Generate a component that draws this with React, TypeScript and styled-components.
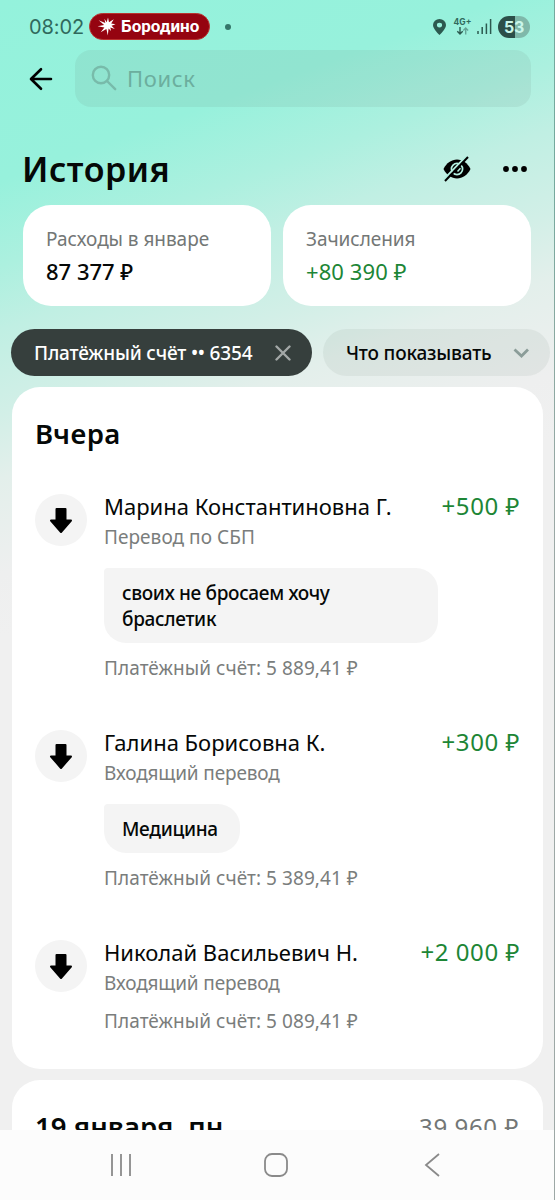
import React from 'react';
import styled, { createGlobalStyle } from 'styled-components';

const GlobalStyle = createGlobalStyle`
  *, *::before, *::after { box-sizing: border-box; }
  body {
    margin: 0;
    background: #f0f0f0;
    color: #050807;
    font-family: "Noto Sans", "Open Sans", sans-serif;
  }
`;

const Screen = styled.div`
  display: flex;
  flex-direction: column;
  width: 555px;
  height: 1200px;
  overflow: hidden;
  border-right: 1px solid rgba(90, 110, 105, 0.55);
  background: linear-gradient(160deg, #94f2dc 0, #97f1dc 170px, #acf0df 250px, #c0efe3 310px, #d2efe7 390px, #e3efeb 450px, #eeefef 540px, #f0f0f0 600px);
`;

const Content = styled.div`
  display: flex;
  flex-direction: column;
  height: 1130px;
  flex: none;
  overflow: hidden;
`;

const StatusBar = styled.header`
  display: flex;
  align-items: center;
  height: 50px;
  padding: 3px 24px 0 29px;
  flex: none;
  color: #30695c;
`;

const Clock = styled.span`
  width: 60px;
  font: 400 20px/24px Inter, Roboto, sans-serif;
  letter-spacing: -0.1px;
`;

const OperatorBadge = styled.span`
  display: flex;
  align-items: center;
  width: 121px;
  height: 27px;
  padding-left: 7px;
  gap: 4px;
  border: 1px solid #b9332f;
  border-radius: 14px;
  background: #950410;
  color: #fff;
  font: 700 17px/25px Roboto, sans-serif;
`;

const Dot = styled.span`
  width: 6px;
  height: 6px;
  margin-left: 15px;
  border-radius: 50%;
  background: #35766a;
`;

const StatusIcons = styled.div`
  display: flex;
  align-items: center;
  margin-left: auto;
`;

const Network = styled.div`
  display: flex;
  flex-direction: column;
  align-items: center;
  width: 19px;
  margin-left: 7px;
  font: 700 8.5px/9px Inter, sans-serif;
`;

const Battery = styled.div`
  display: flex;
  width: 32px;
  height: 22px;
  margin-left: 6px;
  border-radius: 11px;
  overflow: hidden;
  background: linear-gradient(90deg, #2c4f49 0 17px, #7fb8aa 17px);
  justify-content: center;
  color: #c9f6ea;
  font: 700 16px/22px Inter, sans-serif;
  letter-spacing: -0.3px;
`;

const SearchRow = styled.div`
  display: flex;
  align-items: center;
  height: 57px;
  flex: none;
  padding: 0 23px 0 29px;
`;

const SearchBox = styled.div`
  display: flex;
  align-items: center;
  gap: 10px;
  height: 57px;
  flex: 1;
  margin-left: 22px;
  padding: 0 0 2px 16px;
  border-radius: 16px;
  background: rgba(100, 120, 110, 0.1);
  color: #6cae9e;
  font-size: 22px;
  letter-spacing: 0.65px;
`;

const TitleRow = styled.div`
  display: flex;
  align-items: center;
  height: 44px;
  flex: none;
  margin-top: 40px;
  padding: 0 27px 0 22px;
`;

const Title = styled.h1`
  margin: 0 auto 0 0;
  font-size: 34px;
  line-height: 44px;
  font-weight: 600;
  letter-spacing: 0.5px;
`;

const Summary = styled.div`
  display: grid;
  grid-template-columns: 248px 248px;
  gap: 12px;
  flex: none;
  height: 101px;
  margin: 14px 0 0 23px;
`;

const SummaryCard = styled.div`
  padding: 21px 22px 19px 23px;
  border-radius: 28px;
  background: #fff;
`;

const SummaryLabel = styled.div`
  font-size: 19px;
  line-height: 26px;
  letter-spacing: -0.05px;
  color: #737776;
`;

const SummaryValue = styled.div<{ $income?: boolean }>`
  margin-top: 4px;
  font-size: 22px;
  line-height: 30px;
  font-weight: ${(p) => (p.$income ? 450 : 500)};
  letter-spacing: ${(p) => (p.$income ? '0.1px' : '0')};
  color: ${(p) => (p.$income ? '#1d8636' : '#050807')};
`;

const Chips = styled.div`
  display: flex;
  gap: 11px;
  flex: none;
  height: 47px;
  margin: 23px 0 0 11px;
`;

const Chip = styled.div<{ $active?: boolean }>`
  display: flex;
  align-items: center;
  justify-content: space-between;
  flex: none;
  width: ${(p) => (p.$active ? 301 : 227)}px;
  padding: 0 20px 0 23px;
  border-radius: 24px;
  background: ${(p) => (p.$active ? '#363f3d' : 'rgba(90, 120, 110, 0.085)')};
  color: ${(p) => (p.$active ? '#fff' : '#050807')};
  font-size: 19px;
  font-weight: 500;
  letter-spacing: -0.18px;
`;

const DayCard = styled.section`
  flex: none;
  width: 531px;
  margin: 11px 0 0 12px;
  padding: 30px 24px 35px 23px;
  border-radius: 28px;
  background: #fff;
`;

const DayHeader = styled.div`
  display: flex;
  justify-content: space-between;
`;

const DayTitle = styled.h2<{ $spacing: number }>`
  margin: 0;
  font-size: 27.5px;
  line-height: 34px;
  font-weight: 600;
  letter-spacing: ${(p) => p.$spacing}px;
`;

const DayTotal = styled.span`
  font-size: 24px;
  line-height: 34px;
  letter-spacing: 0.6px;
  color: #737776;
`;

const List = styled.div`
  display: flex;
  flex-direction: column;
  gap: 47px;
  margin-top: 41px;
`;

const Operation = styled.article`
  display: flex;
  align-items: flex-start;
`;

const Avatar = styled.div`
  display: flex;
  align-items: center;
  justify-content: center;
  width: 52px;
  height: 52px;
  margin-top: 2px;
  flex: none;
  border-radius: 50%;
  background: #f4f4f4;
`;

const Details = styled.div`
  flex: 1;
  min-width: 0;
  margin-left: 17px;
`;

const NameRow = styled.div`
  display: flex;
  justify-content: space-between;
  height: 28px;
  line-height: 28px;
`;

const Name = styled.span`
  font-size: 22px;
  font-weight: 450;
  letter-spacing: 0;
`;

const Amount = styled.span`
  font-size: 24px;
  font-weight: 450;
  letter-spacing: 0.55px;
  margin-right: -1px;
  color: #1d8636;
`;

const Muted = styled.div<{ $top: number; $spacing?: number }>`
  margin-top: ${(p) => p.$top}px;
  font-size: 19px;
  line-height: 26px;
  letter-spacing: ${(p) => p.$spacing ?? 0}px;
  color: #7a7d7c;
`;

const Message = styled.div<{ $wide: boolean }>`
  width: ${(p) => (p.$wide ? '334px' : 'fit-content')};
  max-width: 334px;
  margin: 18px 0 0;
  padding: 12px 22px 11px 18px;
  border-radius: 4px 22px 22px 22px;
  background: #f4f4f4;
  font-size: 19px;
  line-height: 26px;
  font-weight: 500;
  letter-spacing: -0.33px;
  white-space: pre-line;
`;

const NavBar = styled.nav`
  display: flex;
  align-items: center;
  flex: none;
  height: 70px;
  padding: 0 0 0 109px;
  background: #fcfcfc;

  svg {
    flex: none;
    fill: none;
    stroke: #8a8a8a;
    stroke-width: 1.8;
  }
  svg + svg {
    margin-left: 131px;
  }
  svg:last-child {
    margin-left: 136px;
  }
`;

const operations = [
  { name: 'Марина Константиновна Г.', kind: 'Перевод по СБП', kindSpacing: 0.05, amount: '+500 ₽', message: 'своих не бросаем хочу\nбраслетик', balance: '5 889,41 ₽' },
  { name: 'Галина Борисовна К.', kind: 'Входящий перевод', kindSpacing: -0.15, amount: '+300 ₽', message: 'Медицина', balance: '5 389,41 ₽' },
  { name: 'Николай Васильевич Н.', kind: 'Входящий перевод', kindSpacing: -0.15, amount: '+2 000 ₽', message: '', balance: '5 089,41 ₽' },
];

const BurstIcon = () => (
  <svg width="20" height="20" viewBox="0 0 20 20" fill="#fff">
    <path d="M11 .5l1 4.700 4.800-3-2.600 4.300 4.300.700-4 1.500 3.300 3.200-4.400-1.500.6 3.700-2.400-2.500L10.800 18.500 9.400 12l-5.700 3.300 3.700-4.700L.6 9.300l6.500-1.200L1.700 3.200l6.600 2.700L7.400 1.700l2.300 3.500z" />
  </svg>
);

const BackIcon = () => (
  <svg width="24" height="24" viewBox="0 0 24 24" fill="none" stroke="#000" strokeWidth="2.6" strokeLinecap="round" strokeLinejoin="round">
    <path d="M22 12H2.5M12 2.200L2 12l10 9.800" />
  </svg>
);

const SearchIcon = () => (
  <svg width="26" height="26" viewBox="0 0 26 26" fill="none" stroke="#78bbaa" strokeWidth="2.4" strokeLinecap="round">
    <circle cx="10" cy="10" r="8.2" />
    <path d="M16 16l8.2 8.2" />
  </svg>
);

const PinIcon = () => (
  <svg width="13" height="16" viewBox="0 0 12 16" preserveAspectRatio="none">
    <path fill="#2c594f" fillRule="evenodd" d="M6 0a6 6 0 0 0-6 6c0 4.2 6 10 6 10s6-5.8 6-10a6 6 0 0 0-6-6zm0 3.7a2.4 2.4 0 1 1 0 4.800 2.4 2.4 0 0 1 0-4.800z" />
  </svg>
);

const TrafficIcon = () => (
  <svg width="13" height="8" viewBox="0 0 13 8" fill="none" strokeWidth="1.4">
    <path stroke="#2c594f" d="M4 0v7M1.3 4.3L4 7l2.7-2.7" />
    <path stroke="#64a597" d="M9.7 7.5V1M7.3 3.4L9.7 1l2.4 2.4" />
  </svg>
);

const SignalBars = styled.svg`
  margin-left: 5px;
`;

const SignalIcon = () => (
  <SignalBars width="15" height="15" viewBox="0 0 15 15" stroke="#2c594f" strokeWidth="1.5">
    <path d="M1 12v3M5.200 8v7M9.400 4.500V15M13.600 0v15" />
  </SignalBars>
);

const HiddenIcon = () => (
  <svg width="28" height="26" viewBox="0 0 28 26">
    <path fill="#000" d="M.5 13C3.500 7 8.500 3.500 14 3.500S24.500 7 27.500 13c-3 6-8 9.500-13.500 9.500S3.500 19 .5 13z" />
    <circle cx="14" cy="13" r="5.600" fill="none" stroke="#b4f0e1" strokeWidth="1.700" />
    <path d="M14.500 15.500l3-3.200" stroke="#b4f0e1" strokeWidth="1.500" />
    <path d="M.6 23.600L23.400.200" stroke="#b4f0e1" strokeWidth="2" />
    <path d="M2 25L25 1" stroke="#000" strokeWidth="2" />
  </svg>
);

const MoreDots = styled.svg`
  margin-left: 32px;
`;

const MoreIcon = () => (
  <MoreDots width="24" height="6" viewBox="0 0 24 6">
    <circle cx="3" cy="3" r="2.900" /><circle cx="12" cy="3" r="2.900" /><circle cx="21" cy="3" r="2.900" />
  </MoreDots>
);

const CloseIcon = () => (
  <svg width="18" height="16" viewBox="0 0 18 16" fill="none" stroke="#a3a8a7" strokeWidth="2.4" strokeLinecap="round">
    <path d="M2.500 1.500l13 13M15.500 1.500l-13 13" />
  </svg>
);

const ChevronIcon = () => (
  <svg width="18" height="12" viewBox="0 0 18 12" fill="none" stroke="#8b9d99" strokeWidth="2.8">
    <path d="M2.500 2.500L9.500 9l6.500-6.500" />
  </svg>
);

const ArrowDownIcon = () => (
  <svg width="24" height="27" viewBox="0 0 24 27" fill="#000" stroke="#000" strokeWidth="2" strokeLinejoin="round">
    <path d="M7.500 2h9v11.500H22L12 25 2 13.500h5.500z" />
  </svg>
);

export default function App() {
  return (
    <>
      <GlobalStyle />
      <Screen>
        <Content>
          <StatusBar>
            <Clock>08:02</Clock>
            <OperatorBadge><BurstIcon />Бородино</OperatorBadge>
            <Dot />
            <StatusIcons>
              <PinIcon />
              <Network>4G+<TrafficIcon /></Network>
              <SignalIcon />
              <Battery>53</Battery>
            </StatusIcons>
          </StatusBar>
          <SearchRow>
            <BackIcon />
            <SearchBox><SearchIcon />Поиск</SearchBox>
          </SearchRow>
          <TitleRow>
            <Title>История</Title>
            <HiddenIcon />
            <MoreIcon />
          </TitleRow>
          <Summary>
            <SummaryCard>
              <SummaryLabel>Расходы в январе</SummaryLabel>
              <SummaryValue>87 377 ₽</SummaryValue>
            </SummaryCard>
            <SummaryCard>
              <SummaryLabel>Зачисления</SummaryLabel>
              <SummaryValue $income>+80 390 ₽</SummaryValue>
            </SummaryCard>
          </Summary>
          <Chips>
            <Chip $active>Платёжный счёт •• 6354<CloseIcon /></Chip>
            <Chip>Что показывать<ChevronIcon /></Chip>
          </Chips>
          <DayCard>
            <DayTitle $spacing={0.4}>Вчера</DayTitle>
            <List>
              {operations.map((op) => (
                <Operation key={op.name}>
                  <Avatar><ArrowDownIcon /></Avatar>
                  <Details>
                    <NameRow><Name>{op.name}</Name><Amount>{op.amount}</Amount></NameRow>
                    <Muted $top={4} $spacing={op.kindSpacing}>{op.kind}</Muted>
                    {op.message && <Message $wide={op.message.includes('\n')}>{op.message}</Message>}
                    <Muted $top={12} $spacing={0.06}>Платёжный счёт: {op.balance}</Muted>
                  </Details>
                </Operation>
              ))}
            </List>
          </DayCard>
          <DayCard>
            <DayHeader>
              <DayTitle $spacing={0.05}>19 января, пн</DayTitle>
              <DayTotal>39 960 ₽</DayTotal>
            </DayHeader>
          </DayCard>
        </Content>
        <NavBar>
          <svg width="24" height="24" viewBox="0 0 24 24"><path d="M3 1v22M12 1v22M21 1v22" /></svg>
          <svg width="24" height="24" viewBox="0 0 24 24"><rect x="1" y="1" width="22" height="22" rx="7" /></svg>
          <svg width="16" height="24" viewBox="0 0 16 24"><path d="M15 1L2 12l13 11" /></svg>
        </NavBar>
      </Screen>
    </>
  );
}
